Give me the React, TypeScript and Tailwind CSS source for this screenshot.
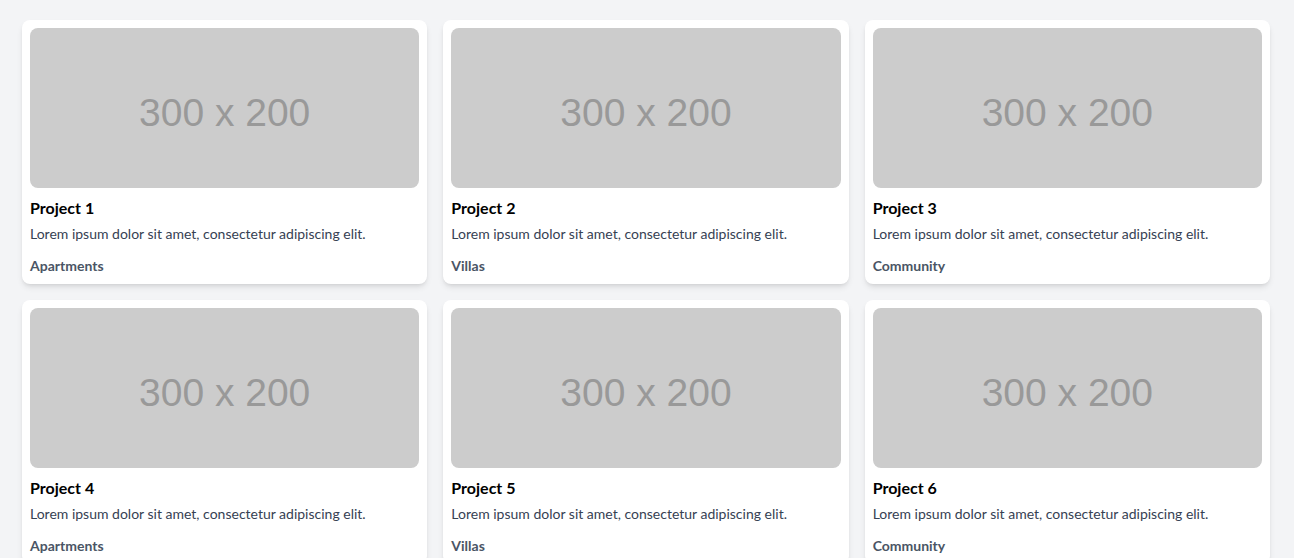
const projects = [
  { id: 1, category: 'Apartments' },
  { id: 2, category: 'Villas' },
  { id: 3, category: 'Community' },
  { id: 4, category: 'Apartments' },
  { id: 5, category: 'Villas' },
  { id: 6, category: 'Community' },
];

// Tarjeta de proyecto con imagen de relleno, título, descripción y categoría
const ProjectCard = ({ id, category }: { id: number; category: string }) => {
  return (
    <div className="bg-white rounded-lg shadow-md p-2">
      <div className="h-40 rounded-lg bg-[#cccccc] flex items-center justify-center pt-[10px]">
        <span className="text-[39px] text-[#999999] font-['Liberation_Sans',Arial,sans-serif]">
          300 x 200
        </span>
      </div>
      <h3 className="mt-2 text-base leading-6 font-bold text-black">Project {id}</h3>
      <p className="mt-1 text-sm text-gray-700">
        Lorem ipsum dolor sit amet, consectetur adipiscing elit.
      </p>
      <p className="mt-3 text-sm font-bold text-gray-600">{category}</p>
    </div>
  );
};

export default function App() {
  return (
    <div className="min-h-screen bg-gray-100 pt-5 pl-[22px] pr-6 pb-6 font-['Lato',sans-serif]">
      <div className="grid grid-cols-3 gap-4">
        {projects.map((p) => (
          <ProjectCard key={p.id} {...p} />
        ))}
      </div>
    </div>
  );
}
